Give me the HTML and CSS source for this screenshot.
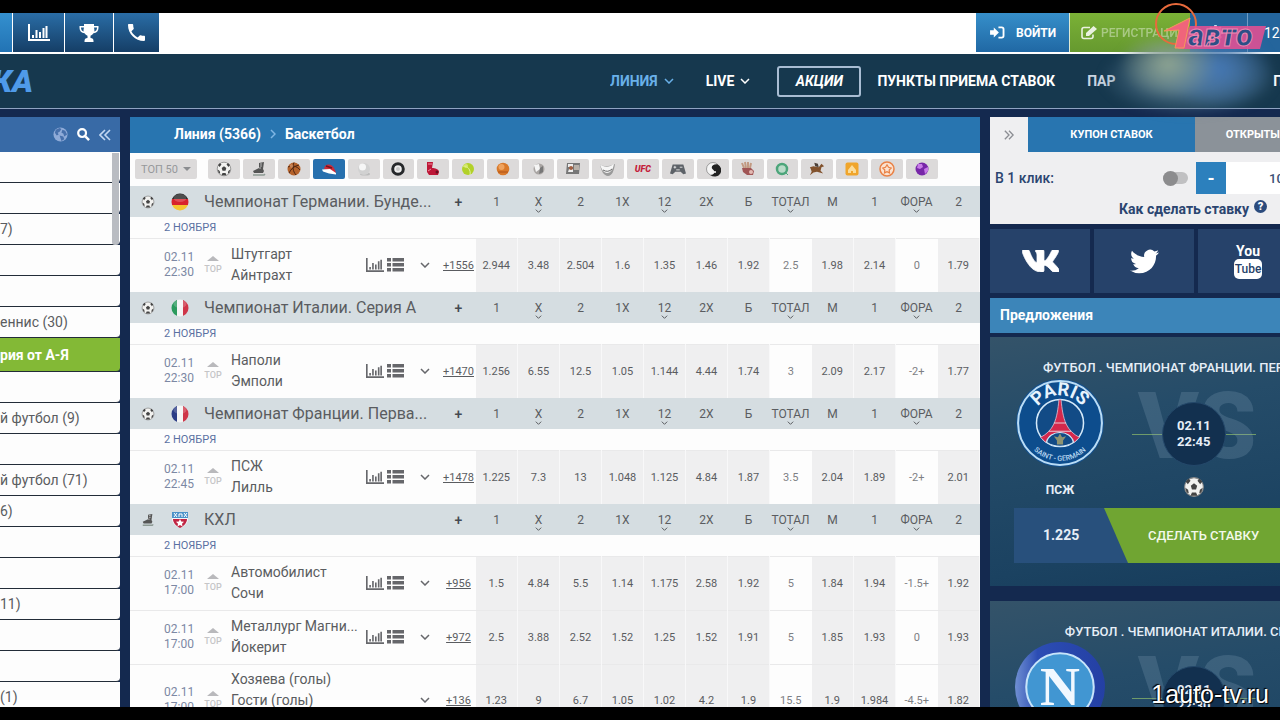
FILE: index.html
```html
<!DOCTYPE html>
<html lang="ru">
<head>
<meta charset="UTF-8">
<meta name="viewport" content="width=device-width, initial-scale=1.0">
<title>Линия · Баскетбол</title>
<link rel="stylesheet" href="styles.css">
</head>
<body>

<svg class="sprite" aria-hidden="true">
  <symbol id="i-chart" viewBox="0 0 22 17"><path d="M1 0v16h21M5 14v-3M8.500 14V6M12 14V8M15.500 14V4M18.500 14V2" fill="none" stroke="currentColor" stroke-width="2"/></symbol>
  <symbol id="i-list" viewBox="0 0 17 14"><path d="M0 0h4v3.500H0zM5.500 0H17v3.500H5.500zM0 5h4v3.500H0zM5.500 5H17v3.500H5.500zM0 10h4v3.500H0zM5.500 10H17v3.500H5.500z" fill="currentColor"/></symbol>
  <symbol id="i-cup" viewBox="0 0 20 18"><path d="M5 0h10v2h4.500v2c0 3-2 5-5 5.300-.8 1.200-1.800 2-3 2.400V14c2 .2 3 1 3 3v1h-9v-1c0-2 1-2.800 3-3v-2.300C7.300 11.300 6.300 10.500 5.500 9.300 2.500 9 .5 7 .5 4V2H5zM2 3.500C2 5.700 3 7 4.700 7.600 4.300 6.300 4.800 5 5 3.500zm16 0h-3c.2 1.500.6 2.800.3 4.100C17 7 18 5.700 18 3.500z" fill="currentColor" fill-rule="evenodd"/></symbol>
  <symbol id="i-phone" viewBox="3 3 18 18"><path d="M6.620 10.790c1.440 2.830 3.760 5.140 6.590 6.590l2.200-2.200c.27-.27.67-.36 1.020-.24 1.120.37 2.330.57 3.570.57.55 0 1 .45 1 1V20c0 .55-.45 1-1 1-9.390 0-17-7.610-17-17 0-.55.45-1 1-1h3.500c.55 0 1 .45 1 1 0 1.250.2 2.450.57 3.570.11.35.03.74-.25 1.020z" fill="currentColor"/></symbol>
  <symbol id="i-enter" viewBox="0 0 16 14"><path d="M0 4.500h4V1.500l5.500 5.500L4 12.500v-3H0z" fill="currentColor"/><path d="M9 1.500h3.500q2 0 2 2v7q0 2-2 2H9" fill="none" stroke="currentColor" stroke-width="2"/></symbol>
  <symbol id="i-edit" viewBox="0 0 16 14"><path d="M12 8.500v2q0 2-2 2H3q-2 0-2-2v-7q0-2 2-2h6" fill="none" stroke="currentColor" stroke-width="1.600"/><path d="M5 10V7l7.500-7L16 3 8 10z" fill="currentColor"/></symbol>
  <symbol id="i-gear" viewBox="0 0 16 16"><path d="M6.700 0h2.600l.5 2.200 1.300.5 1.900-1.200 1.700 1.700-1.100 1.900.5 1.300 2.200.4v2.600l-2.200.5-.5 1.300 1.100 1.900-1.700 1.700-1.900-1.200-1.300.6-.5 2.100H6.700l-.5-2.100-1.300-.6L3 14.800l-1.700-1.700 1.100-1.900-.5-1.300-1.900-.5V6.800l1.900-.4.5-1.300-1.100-1.900L3 1.500l1.900 1.200 1.300-.5zM8 5.200a2.800 2.800 0 100 5.600 2.800 2.800 0 000-5.600z" fill="currentColor" fill-rule="evenodd"/></symbol>
  <symbol id="i-globe" viewBox="0 0 16 16"><circle cx="8" cy="8" r="7.500" fill="#8fabd8"/><path d="M3 3l4-2 2 1-2 3-2 1 1 2-2 1-2-3zM10 3l3 1 2 4-3 2-1-3-2-1zM7 9l4 1 1 3-3 2z" fill="#4770ab"/></symbol>
  <symbol id="i-search" viewBox="0 0 14 14"><circle cx="5.500" cy="5.500" r="4.200" fill="none" stroke="currentColor" stroke-width="2.400"/><path d="M9 9l4 4" stroke="currentColor" stroke-width="2.600"/></symbol>
  <symbol id="i-dbl" viewBox="0 0 12 12"><path d="M6 1L1 6l5 5M11 1L6 6l5 5" fill="none" stroke="currentColor" stroke-width="1.600"/></symbol>
  <symbol id="i-down" viewBox="0 0 10 6"><path d="M1 1l4 4 4-4" fill="none" stroke="currentColor" stroke-width="1.500"/></symbol>
  <symbol id="i-vk" viewBox="18 96 530 320"><path d="M545 117.700c3.700-12.500 0-21.700-17.800-21.700h-58.900c-15 0-21.900 7.900-25.600 16.700 0 0-30 73.100-72.400 120.500-13.700 13.700-20 18.100-27.500 18.100-3.700 0-9.400-4.400-9.400-16.900V117.700c0-15-4.200-21.700-16.600-21.700h-92.600c-9.400 0-15 7-15 13.500 0 14.200 21.200 17.500 23.400 57.500v86.800c0 19-3.400 22.500-10.900 22.500-20 0-68.600-73.400-97.400-157.400-5.800-16.300-11.500-22.900-26.600-22.900H38.800c-16.800 0-20.200 7.900-20.200 16.700 0 15.600 20 93.100 93.100 195.500C160.400 378.100 229 416 291.400 416c37.500 0 42.100-8.400 42.100-22.900 0-66.800-3.400-73.100 15.400-73.100 8.700 0 23.700 4.400 58.700 38.100 40 40 46.600 57.900 69 57.900h58.900c16.800 0 25.300-8.400 20.400-25-11.200-34.900-86.900-106.700-90.300-111.500-8.700-11.200-6.200-16.200 0-26.200.1-.1 72-101.300 79.400-135.600z" fill="currentColor" stroke="currentColor" stroke-width="12"/></symbol>
  <symbol id="i-tw" viewBox="0 2 24 20"><path d="M23.953 4.570a10 10 0 01-2.825.775 4.958 4.958 0 002.163-2.723c-.951.555-2.005.959-3.127 1.184a4.920 4.920 0 00-8.384 4.482C7.690 8.095 4.067 6.130 1.640 3.162a4.822 4.822 0 00-.666 2.475c0 1.710.87 3.213 2.188 4.096a4.904 4.904 0 01-2.228-.616v.06a4.923 4.923 0 003.946 4.827 4.996 4.996 0 01-2.212.085 4.936 4.936 0 004.604 3.417 9.867 9.867 0 01-6.102 2.105c-.39 0-.779-.023-1.170-.067a13.995 13.995 0 007.557 2.209c9.053 0 13.998-7.496 13.998-13.985 0-.21 0-.42-.015-.63A9.935 9.935 0 0024 4.590z" fill="currentColor"/></symbol>

  <!-- виды спорта -->
  <symbol id="s-soccer" viewBox="0 0 16 16"><circle cx="8" cy="8" r="6.800" fill="#f2f2f0" stroke="#888" stroke-width=".8"/><path d="M5.700 7L8 5.300 10.300 7l-.8 2.800h-3zM2 4l2-2 1.500 1.500-2 2.500zM14 4l-2-2-1.500 1.500 2 2.500zM1.700 8.500l2 1.500.5 2.500-1.500-.5zM14.300 8.500l-2 1.500-.5 2.500 1.500-.5zM5.500 14.300L6.500 12h3l1 2.300z" fill="#444"/></symbol>
  <symbol id="s-skate" viewBox="0 0 16 16"><path d="M8 2l5-1-1 7 1 2-1 2H3l-1-2 6-3z" fill="#555"/><path d="M9 3l2 0M9 5l2 0M8 7l2 0" stroke="#bbb"/><path d="M2 14h11l1-1" stroke="#8d9a94" stroke-width="1.500" fill="none"/></symbol>
  <symbol id="s-basket" viewBox="0 0 16 16"><circle cx="8" cy="8" r="6.500" fill="#b5622b"/><path d="M2 6c4-2 9-1 12 3M8 1.500c-2 4-1 9 2 12.500M3 12c2-4 5-7 10-8" fill="none" stroke="#4d2512"/><circle cx="5.500" cy="5" r="1.700" fill="#e2a070" opacity=".7"/></symbol>
  <symbol id="s-cap" viewBox="0 0 16 16"><path d="M3 8c1-6 8-6 11 1l1 3z" fill="#cf2b39"/><path d="M5 5l6 2" stroke="#721421" stroke-width="1.500"/><path d="M1 8.500l8-.5 6 4v1.500l-7-1-6-2z" fill="#fff"/></symbol>
  <symbol id="s-white" viewBox="0 0 16 16"><ellipse cx="9" cy="13" rx="5" ry="1.500" fill="#bbb"/><circle cx="8" cy="8" r="6" fill="#d1d1d1"/><circle cx="6.500" cy="6" r="3.500" fill="#f6f6f6"/></symbol>
  <symbol id="s-tyre" viewBox="0 0 16 16"><circle cx="8" cy="8" r="5.300" fill="#eee" stroke="#26282b" stroke-width="3"/><circle cx="8" cy="8" r="2" fill="#c9c9c9"/></symbol>
  <symbol id="s-box" viewBox="0 0 16 16"><path d="M2 1h6l-1 6c3 0 7 1 7 4l-1 3H4l-2-3z" fill="#bd1737"/><path d="M3 3h4M3 10l3-2" stroke="#f68b9c"/><circle cx="12" cy="11" r="1.500" fill="#6c0d20"/></symbol>
  <symbol id="s-tennis" viewBox="0 0 16 16"><circle cx="8" cy="8" r="6" fill="#b2d129"/><path d="M3 5c5 0 8 4 7 9" stroke="#e3f2a0" fill="none"/><circle cx="6" cy="5" r="2" fill="#dcec7d" opacity=".8"/></symbol>
  <symbol id="s-orange" viewBox="0 0 16 16"><circle cx="8" cy="8" r="6.300" fill="#d9792a"/><circle cx="6.500" cy="6" r="3" fill="#efa35f"/><path d="M3 11h10" stroke="#af5317"/></symbol>
  <symbol id="s-shuttle" viewBox="0 0 16 16"><circle cx="9" cy="8" r="5.500" fill="#a9a5a3"/><path d="M4 4l5-1 1 5-4 3z" fill="#f5f5f5"/><path d="M10 7l3-2v6l-4 2z" fill="#777"/></symbol>
  <symbol id="s-tv" viewBox="0 0 16 16"><path d="M2 2h13l-1 11H1z" fill="#777"/><path d="M3 3h5v3H3zM4 8h4v3H3z" fill="#eee"/><path d="M9 4h5v5H9z" fill="#b8b1a9"/><circle cx="6" cy="7" r="2" fill="#a25f41"/></symbol>
  <symbol id="s-base" viewBox="0 0 16 16"><path d="M0 3c3 3 8 3 15 0-1 7-3 12-7 12S1 10 0 3z" fill="#9a9a9a"/><path d="M0 3c4 4 10 3 14 0-1 6-4 9-7 9S1 8 0 3z" fill="#f6f6f6"/><path d="M3 9q5 3 9-1" stroke="#666" fill="none"/></symbol>
  <symbol id="s-pad" viewBox="0 0 18 16"><path d="M3 3h12l3 10-3 1-3-3H6l-3 3-3-1z" fill="#5d6268"/><path d="M4 6h3M5.500 4.500v3M11 6h3M7 9h4" stroke="#e9e9e9"/></symbol>
  <symbol id="s-yin" viewBox="0 0 16 16"><circle cx="8" cy="8" r="6.500" fill="#f4f4f4" stroke="#555" stroke-width=".5"/><path d="M11 2.200A6.500 6.500 0 117 14.400c4-1 4-5 1-6S6 3 11 2.200z" fill="#222" transform="rotate(15 8 8)"/><circle cx="10" cy="11" r="1" fill="#fff"/></symbol>
  <symbol id="s-hand" viewBox="0 0 16 16"><path d="M2 2l2 5M5 1l1 6M8 1v6M11 2l-1 5" stroke="#c29a82" stroke-width="2"/><path d="M2 7h9l3 3-1 4H7l-4-3z" fill="#a05555"/><circle cx="11" cy="11" r="2" fill="#e3bab3"/></symbol>
  <symbol id="s-ring" viewBox="0 0 16 16"><circle cx="8" cy="8" r="5" fill="#b9dac8" stroke="#4ca57a" stroke-width="2.500"/><path d="M12 12l2 2" stroke="#4ca57a"/></symbol>
  <symbol id="s-horse" viewBox="0 0 18 16"><path d="M1 6l4-1 6 1 3-4 3 3-3 1-1 4 3 3-4-1-3-1-4 1-4 3 2-4-1-3z" fill="#82522d"/><path d="M6 1l4 1 1 4-4-1z" fill="#4c4038"/></symbol>
  <symbol id="s-yellow" viewBox="0 0 16 16"><rect x="1.500" y="1.500" width="13" height="13" rx="2" fill="#f0a52b"/><path d="M4 9l4-5 4 5v3H9v-2H7v2H4z" fill="#fbdc9a"/></symbol>
  <symbol id="s-star" viewBox="0 0 16 16"><circle cx="8" cy="8" r="7" fill="#fbe2d0" stroke="#e98145" stroke-width="1.500"/><path d="M8 3.800l1.500 2.500 2.700.7-2 2 .3 2.900L8 10.700l-2.500 1.200.3-2.900-2-2 2.700-.7z" fill="none" stroke="#e98145" stroke-width="1.200"/></symbol>
  <symbol id="s-purple" viewBox="0 0 16 16"><circle cx="8" cy="8" r="6.500" fill="#7726a8"/><path d="M4 3l4 0 1 3-3 2-3-1zM10 8l4-2v4l-3 3z" fill="#c87be8"/></symbol>

  <!-- флаги -->
  <symbol id="f-de" viewBox="0 0 18 18"><g clip-path="url(#round)"><path fill="#222" d="M0 0h18v6H0z"/><path fill="#d8232c" d="M0 6h18v6H0z"/><path fill="#f5c52f" d="M0 12h18v6H0z"/></g><ellipse cx="9" cy="5" rx="6.500" ry="4" fill="#fff" opacity=".2"/></symbol>
  <symbol id="f-it" viewBox="0 0 18 18"><g clip-path="url(#round)"><path fill="#2b9a5d" d="M0 0h6v18H0z"/><path fill="#f4f4f4" d="M6 0h6v18H6z"/><path fill="#cf3548" d="M12 0h6v18h-6z"/></g><ellipse cx="9" cy="5" rx="6.500" ry="4" fill="#fff" opacity=".2"/></symbol>
  <symbol id="f-fr" viewBox="0 0 18 18"><g clip-path="url(#round)"><path fill="#2b3c86" d="M0 0h6v18H0z"/><path fill="#f4f4f4" d="M6 0h6v18H6z"/><path fill="#cf3548" d="M12 0h6v18h-6z"/></g><ellipse cx="9" cy="5" rx="6.500" ry="4" fill="#fff" opacity=".2"/></symbol>
  <symbol id="f-khl" viewBox="0 0 18 18"><path d="M1 1h16v7c0 4-3 7-8 9-5-2-8-5-8-9z" fill="#f3f6fa"/><path d="M1 1h16v6H1z" fill="#4b92c9"/><path d="M3 2l3 4M6 2L3 6M8 6V3h3v3M13 2l3 4M16 2l-3 4" stroke="#fff" fill="none"/><path d="M2 8h14c0 4-3 7-7 9-4-2-7-5-7-9z" fill="#c02543"/><path d="M9 8l1.200 2.500 2.800.3-2 2 .5 2.700L9 14l-2.500 1.500.5-2.700-2-2 2.800-.3z" fill="#fff"/></symbol>
  <clipPath id="round"><circle cx="9" cy="9" r="8.500"/></clipPath>
</svg>

<div class="screen">
  <div class="topbar">
    <button class="tool on" aria-label="Меню"></button>
    <button class="tool w-l" aria-label="Статистика"><svg width="22" height="17"><use href="#i-chart"/></svg></button>
    <button class="tool w-m" aria-label="Результаты"><svg width="20" height="18"><use href="#i-cup"/></svg></button>
    <button class="tool w-s" aria-label="Телефон"><svg width="17" height="17"><use href="#i-phone"/></svg></button>
    <div class="account">
      <button class="login"><svg width="15" height="13"><use href="#i-enter"/></svg>ВОЙТИ</button>
      <button class="reg"><svg width="16" height="14"><use href="#i-edit"/></svg><span>РЕГИСТРАЦИЯ</span></button>
      <button class="gear" aria-label="Настройки"><svg width="15" height="15"><use href="#i-gear"/></svg></button>
      <span class="clock">12</span>
    </div>
  </div>

  <header class="head">
    <a class="brand" href="#">КА</a>
    <nav class="nav">
      <a class="active" href="#">ЛИНИЯ <svg width="10" height="6"><use href="#i-down"/></svg></a>
      <a href="#">LIVE <svg width="10" height="6"><use href="#i-down"/></svg></a>
      <a class="promo" href="#">АКЦИИ</a>
      <a href="#">ПУНКТЫ ПРИЕМА СТАВОК</a>
      <a class="partner" href="#">ПАР</a>
      <a class="last" href="#">П</a>
    </nav>
  </header>

  <div class="cols">
    <aside class="left">
      <div class="left-head">
        <svg width="15" height="15"><use href="#i-globe"/></svg>
        <svg width="13" height="13"><use href="#i-search"/></svg>
        <svg width="12" height="12"><use href="#i-dbl"/></svg>
      </div>
      <ul class="menu" id="menu"></ul>
      <div class="thumb"></div>
    </aside>

    <main class="line">
      <div class="crumbs"><a href="#">Линия (5366)</a><svg width="10" height="6"><use href="#i-down"/></svg><a href="#">Баскетбол</a></div>
      <div class="sports">
        <button class="top50">ТОП 50 <i></i></button>
        <div class="sport-list" id="sports"></div>
      </div>
      <table class="odds">
        <colgroup><col><col class="c-more"><col span="12" class="c-odd"></colgroup>
        <tbody id="odds"></tbody>
      </table>
    </main>

    <aside class="right">
      <section class="coupon">
        <div class="tabs">
          <button class="fold" aria-label="Свернуть"><svg width="10" height="10"><use href="#i-dbl"/></svg></button>
          <button class="tab on">КУПОН СТАВОК</button>
          <button class="tab">ОТКРЫТЫЕ СТАВКИ</button>
        </div>
        <div class="click">
          <label for="oneClick">В 1 клик:</label>
          <input type="checkbox" id="oneClick" class="switch">
          <button class="minus" aria-label="Меньше">-</button>
          <input type="text" class="stake" value="100" aria-label="Сумма ставки">
        </div>
        <a class="how" href="#">Как сделать ставку <b>?</b></a>
      </section>
      <div class="social">
        <a href="#" aria-label="ВКонтакте"><svg width="37" height="22"><use href="#i-vk"/></svg></a>
        <a href="#" aria-label="Twitter"><svg width="29" height="25"><use href="#i-tw"/></svg></a>
        <a href="#" class="yt"><span>You</span><b>Tube</b></a>
      </div>
      <h2>Предложения</h2>

      <article class="offer">
        <h3>ФУТБОЛ . ЧЕМПИОНАТ ФРАНЦИИ. ПЕРВАЯ ЛИГА</h3>
        <div class="duel">
          <div class="team">
            <svg width="90" height="90" viewBox="0 0 88 88">
              <defs><path id="arcTop" d="M17 44a27 27 0 0154 0"/><path id="arcBot" d="M7 44a37 37 0 0074 0"/></defs>
              <circle cx="44" cy="44" r="43" fill="#14508c"/>
              <circle cx="44" cy="44" r="41" fill="#0d4d8d" stroke="#b9dcf6" stroke-width="2"/>
              <circle cx="44" cy="44" r="23" fill="#124b86" stroke="#d5eafa" stroke-width="1.500"/>
              <path d="M43 21h2c1 10 2 17 5 24 3 6 7 10 13 13l-5 5c-2-6-7-9-14-9s-12 3-14 9l-5-5c6-3 10-7 13-13 3-7 4-14 5-24z" fill="#d5284c" stroke="#d9c3d6" stroke-width=".8"/>
              <path d="M38 44h12M33 52h22" stroke="#e9cbd6"/>
              <path d="M31 63c2-13 24-13 26 0-8 5-18 5-26 0z" fill="#124b86" stroke="#d5eafa"/>
              <path d="M44 54l2 4 4-1-3 4v4h-6v-4l-3-4 4 1z" fill="#8f9472"/>
              <text class="psg-big"><textPath href="#arcTop" startOffset="50%" text-anchor="middle">PARIS</textPath></text>
              <text class="psg-small"><textPath href="#arcBot" startOffset="50%" text-anchor="middle">SAINT - GERMAIN</textPath></text>
            </svg>
            <span>ПСЖ</span>
          </div>
          <div class="versus">
            <span class="vs">VS</span>
            <time>02.11<br>22:45</time>
            <svg class="ball" width="22" height="22"><use href="#s-soccer"/></svg>
          </div>
        </div>
        <div class="bet"><span>1.225</span><button>СДЕЛАТЬ СТАВКУ</button></div>
      </article>

      <article class="offer">
        <h3>ФУТБОЛ . ЧЕМПИОНАТ ИТАЛИИ. СЕРИЯ А</h3>
        <div class="duel">
          <div class="team">
            <svg width="90" height="90" viewBox="0 0 88 88">
              <defs><linearGradient id="nap" x1="0" x2="1"><stop offset="0" stop-color="#6f8fd2"/><stop offset=".25" stop-color="#2c4db4"/><stop offset="1" stop-color="#2440a4"/></linearGradient></defs>
              <circle cx="44" cy="44" r="44" fill="url(#nap)"/>
              <circle cx="44" cy="44" r="33" fill="#4196d2" stroke="#c7e4fa" stroke-width="2"/>
              <text x="44" y="62" text-anchor="middle" class="nap">N</text>
            </svg>
          </div>
          <div class="versus">
            <span class="vs">VS</span>
            <time>02.11<br>22:30</time>
          </div>
        </div>
      </article>
    </aside>
  </div>
</div>

<div class="haze"></div>
<svg class="channel" width="116" height="52" viewBox="0 0 116 52">
  <circle cx="24" cy="24" r="20" fill="none" stroke="#e86a3c" stroke-width="2"/>
  <path d="M38 26h76l-6 23H26z" fill="#ea4f93" opacity=".85"/>
  <path d="M12 31l26-13-6 30h-9l4-18z" fill="#f0647b" stroke="#f39a58"/>
  <text x="36" y="46">авто</text>
</svg>
<div class="site">1auto-tv.ru</div>

<script>
const $ = s => document.querySelector(s);
const icon = (id, w = 16, h = w) => `<svg width="${w}" height="${h}"><use href="#${id}"/></svg>`;

const MENU = ['', '', '7)', '', '', 'еннис (30)', '*рия от А-Я', '', 'й футбол (9)', '', 'й футбол (71)', '6)', '', '', '11)', '', '', '(1)'];
const SPORTS = ['soccer','skate','basket','cap','white','tyre','box','tennis','orange','shuttle','tv','base','ufc','pad','yin','hand','ring','horse','yellow','star','purple'];
const HEADS = ['1','X','2','1X','12','2X','Б','ТОТАЛ','М','1','ФОРА','2'];
const DROP = [1, 4, 7, 10];   // колонки со стрелкой
const LEAGUES = [
  {sport:'soccer', flag:'de', name:'Чемпионат Германии. Бунде...', rows:[
    ['22:30','Штутгарт','Айнтрахт',1556,'2.944 3.48 2.504 1.6 1.35 1.46 1.92 2.5 1.98 2.14 0 1.79']]},
  {sport:'soccer', flag:'it', name:'Чемпионат Италии. Серия А', rows:[
    ['22:30','Наполи','Эмполи',1470,'1.256 6.55 12.5 1.05 1.144 4.44 1.74 3 2.09 2.17 -2+ 1.77']]},
  {sport:'soccer', flag:'fr', name:'Чемпионат Франции. Перва...', rows:[
    ['22:45','ПСЖ','Лилль',1478,'1.225 7.3 13 1.048 1.125 4.84 1.87 3.5 2.04 1.89 -2+ 2.01']]},
  {sport:'skate', flag:'khl', name:'КХЛ', rows:[
    ['17:00','Автомобилист','Сочи',956,'1.5 4.84 5.5 1.14 1.175 2.58 1.92 5 1.84 1.94 -1.5+ 1.92'],
    ['17:00','Металлург Магни...','Йокерит',972,'2.5 3.88 2.52 1.52 1.25 1.52 1.91 5 1.85 1.93 0 1.93'],
    ['17:00','Хозяева (голы)','Гости (голы)',136,'1.23 9 6.7 1.05 1.02 4.2 1.9 15.5 1.9 1.984 -4.5+ 1.82','tall']]}
];

$('#menu').innerHTML = MENU.map(m => m[0] === '*' ? `<li class="all">${m.slice(1)}</li>` : `<li>${m}</li>`).join('');

$('#sports').innerHTML = SPORTS.map(s =>
  `<button class="${s === 'cap' ? 'on' : ''}" aria-label="${s}">${s === 'ufc' ? '<em>UFC</em>' : icon('s-' + s)}</button>`).join('');

function matchRow([time, a, b, more, odds, tall]){
  const cells = odds.split(' ').map((o, i) => `<td class="${i === 7 || i === 10 ? 'val' : 'odd'}">${o}</td>`).join('');
  return `<tr class="match ${tall || ''}">
    <td class="game"><div>
      <time>02.11<br>${time}</time>
      <span class="top">TOP</span>
      <span class="teams"><span>${a}</span><span>${b}</span></span>
      <span class="stat">${tall ? '' : icon('i-chart', 18, 14) + icon('i-list', 17, 14)}</span>
      <button class="open" aria-label="Развернуть">${icon('i-down', 10, 6)}</button>
    </div></td>
    <td class="more"><a href="#">+${more}</a></td>${cells}</tr>`;
}

$('#odds').innerHTML = LEAGUES.map(l => `<tr class="league">
    <th><div>${icon('s-' + l.sport, 14)}${icon('f-' + l.flag, 18)}<span>${l.name}</span></div></th>
    <th class="plus">+</th>
    ${HEADS.map((h, i) => `<th class="${DROP.includes(i) ? 'drop' : ''}">${h}${DROP.includes(i) ? icon('i-down', 7, 4) : ''}</th>`).join('')}
  </tr>
  <tr class="day"><td colspan="14">2 НОЯБРЯ</td></tr>
  ${l.rows.map(matchRow).join('')}`).join('');
</script>
</body>
</html>
```
FILE: styles.css
```css
:root {
  --navy: #14294f;
  --deep: #16384e;
  --blue: #2875b0;
  --green: #70a532;
  --grey: #d5dde1;
  --text: #5a5c60;
}
*{box-sizing:border-box;}
body{margin:0;padding:13px 0;background:#000;font-family:Roboto,"Open Sans",sans-serif;font-size:14px;color:var(--text);overflow:hidden;}
button,input{font:inherit;border:0;padding:0;margin:0;cursor:pointer;}
a{color:inherit;text-decoration:none;}
svg{display:block;flex:none;}
.sprite{position:absolute;width:0;height:0;}
.screen{display:flex;flex-direction:column;height:calc(100vh - 26px);overflow:hidden;background:var(--navy);}

/* верхняя полоса */
.topbar{display:flex;flex:none;height:41px;padding-bottom:2px;gap:1px;background:#fff;}
.tool{display:flex;align-items:center;justify-content:center;background:linear-gradient(#2a6da6,#153e66);color:#fff;}
.tool.on{width:12px;background:linear-gradient(#3490cf,#2273b4);}
.w-l{width:51px;}
.w-m{width:48px;}
.w-s{width:45px;}
.account{display:flex;width:304px;margin-left:auto;color:#fff;background:#24659c;}
.account button{display:flex;align-items:center;color:#fff;font-weight:500;}
.account .login{width:93px;gap:11px;padding-left:14px;font-size:12px;font-weight:700;background:linear-gradient(#368fca,#2068a4);}
.account .reg{width:121px;gap:4px;padding-left:11px;font-size:12px;background:linear-gradient(#7ab136,#66992f);border-left:1px solid #dfe9d4;}
.reg svg{opacity:.85;}
.reg span{opacity:.4;}
.account .gear{width:58px;padding-left:18px;background:#24659c;border-right:1px solid #6f9cc4;color:#c9dcf2;}
.clock{padding:11px 0 0 16px;font-size:14px;line-height:18px;}

/* шапка */
.head{display:flex;flex:none;align-items:center;height:55px;background:var(--deep);border-bottom:1px solid #8fa3c2;}
.brand{margin-left:-8px;font-size:32px;line-height:32px;font-weight:900;font-style:italic;color:#4f9bea;}
.nav{display:flex;align-items:center;width:670px;margin-left:auto;font-size:14px;font-weight:700;color:#fff;white-space:nowrap;overflow:hidden;}
.nav a{display:flex;align-items:center;flex:none;gap:6px;margin-right:32px;}
.nav .active{color:#69b0e8;}
.nav .promo{width:84px;height:31px;justify-content:center;margin:0 16px 0 -5px;border:2px solid #a9bdd3;border-radius:3px;font-style:italic;}
.nav .partner{width:154px;color:#c9d5e1;}

/* колонки */
.cols{display:flex;flex:1;gap:10px;min-height:0;padding-top:8px;}
.left{position:relative;flex:none;width:120px;overflow:hidden;}
.left-head{display:flex;align-items:center;justify-content:flex-end;gap:9px;height:35px;padding-right:9px;background:#386aa6;color:#c3d7f2;}
.left-head svg:nth-child(2){color:#fff;}
.menu{list-style:none;margin:0;padding:0;}
.menu li{height:31px;line-height:30px;font-size:14px;background:#fdfdfd;border-bottom:1px solid #222c38;border-radius:0 0 4px 0;white-space:nowrap;}
.menu .all{height:34px;line-height:34px;background:#83b936;color:#fff;font-weight:700;}
.thumb{position:absolute;top:36px;right:1px;width:7px;height:92px;background:#b9bcc2;border-radius:0 0 3px 3px;}

.line{flex:1;min-width:0;overflow:hidden;background:#fdfdfd;}
.crumbs{display:flex;align-items:center;gap:7px;height:36px;padding-left:44px;padding-bottom:2px;background:var(--blue);color:#fff;font-size:14px;font-weight:700;}
.crumbs svg{transform:rotate(-90deg);color:#7fb6e4;}
.sports{display:flex;gap:11px;height:33px;padding:6px 42px 7px 5px;}
.sports button{background:#dcdada;border-radius:2px;}
.sports .top50{display:flex;align-items:center;justify-content:center;gap:5px;width:62px;color:#96989b;font-size:11px;}
.top50 i{border:4px solid transparent;border-top-color:#8b8d90;border-bottom:0;}
.sport-list{display:flex;flex:1;gap:3px;}
.sport-list button{display:flex;flex:1;align-items:center;justify-content:center;min-width:0;}
.sport-list .on{background:#2770ae;}
.sport-list em{color:#c4213a;font-size:9px;font-weight:900;}

.odds{width:100%;table-layout:fixed;border-collapse:collapse;font-size:11px;text-align:center;}
.odds th,.odds td{padding:0;font-weight:400;}
.c-more{width:34px;}
.c-odd{width:42px;}
.league{height:31px;background:var(--grey);font-size:12px;}
.league div{display:flex;align-items:center;padding-left:11px;text-align:left;}
.league div svg + svg{margin:0 15px 0 16px;}
.league div span{font-size:16px;line-height:30px;white-space:nowrap;}
.odds .plus{font-size:14px;font-weight:500;color:#454a52;}
.drop{position:relative;}
.drop svg{position:absolute;left:50%;top:23px;margin-left:-4px;}
.day{height:21px;}
.odds .day td{padding-left:34px;text-align:left;color:#5a70a2;font-size:11px;}
.match{height:54px;border-top:1px solid #e9e9ea;}
.match.tall{height:72px;}
.game div{display:flex;align-items:center;padding-left:34px;text-align:left;}
.game time{width:38px;color:#7c88a4;font-size:12px;line-height:15px;}
.top{width:22px;margin-right:7px;color:#c5c5c7;font-size:9px;line-height:10px;font-weight:500;text-align:center;}
.top::before{content:"";display:block;width:0;margin:0 auto 3px;border:6px solid transparent;border-top:0;border-bottom:5px solid #b9b9bc;}
.teams{width:135px;font-size:14px;line-height:21px;}
.teams span{display:block;white-space:nowrap;}
.tall .teams{padding-bottom:21px;}
.stat{display:flex;gap:3px;width:54px;color:#66676b;}
.open{background:none;color:#66676b;}
.more a{text-decoration:underline;}
.odd{background:#efeff0;border-right:1px solid #f8f8f9;}
.val{color:#7d7f84;}

/* правая колонка */
.right{flex:none;width:290px;overflow:hidden;}
.coupon{width:372px;height:107px;background:#efeff1;color:#2b4570;}
.tabs{display:flex;height:35px;}
.fold{display:flex;align-items:center;justify-content:center;width:38px;background:none;color:#8b8d93;}
.fold svg{transform:rotate(180deg);}
.tab{flex:1;background:#8b9299;color:#fff;font-size:11px;font-weight:700;}
.tab.on{background:var(--blue);}
.click{display:flex;align-items:center;height:52px;padding-left:5px;font-weight:500;}
.click label{width:168px;}
.switch{appearance:none;display:flex;align-items:center;width:25px;height:12px;margin-right:8px;border-radius:6px;background:#c0c0c2;}
.switch::before{content:"";width:15px;height:15px;border-radius:50%;background:#8c8c8e;}
.minus{width:30px;height:32px;background:#2c80bd;color:#fff;font-size:18px;font-weight:700;}
.stake{width:136px;height:32px;padding-left:43px;background:#fff;color:#3c5276;font-size:13px;}
.how{display:flex;align-items:center;gap:5px;padding-left:129px;line-height:8px;font-weight:700;}
.how b{width:13px;height:13px;margin-top:-4px;border-radius:50%;background:#2b4b7d;color:#fff;font-size:11px;line-height:13px;text-align:center;}
.social{display:flex;gap:4px;width:408px;padding:5px 0;}
.social a{display:flex;align-items:center;justify-content:center;width:100px;height:64px;background:#26426a;color:#fff;}
.social .yt{flex-direction:column;font-weight:700;font-size:14px;line-height:15px;}
.yt b{padding:3px 1px;border-radius:5px;background:#fff;color:#26426a;font-size:12px;line-height:14px;font-weight:500;}
.right h2{margin:0 0 4px;height:35px;padding-left:10px;background:#3c85b9;color:#fff;font-size:14px;line-height:35px;font-weight:700;}
.offer{width:408px;height:249px;margin-bottom:15px;padding-top:21px;background:linear-gradient(170deg,#345369 0,#254c69 30%,#1b4261 75%,#153a59);color:#e6eef7;}
.offer h3{margin:0;font-size:13px;line-height:20px;font-weight:500;text-align:center;}
.duel{display:flex;height:130px;}
.team{display:flex;flex-direction:column;align-items:center;gap:12px;width:140px;font-size:12px;font-weight:700;line-height:20px;}
.versus{position:relative;display:flex;flex-direction:column;align-items:center;width:128px;padding-top:24px;background:linear-gradient(#6f9b6a,#6f9b6a) 50% 56px/124px 1px no-repeat;}
.vs{position:absolute;left:8px;top:3px;font-size:92px;line-height:92px;font-weight:900;color:#8fabc2;opacity:.22;}
.versus time{position:relative;display:flex;align-items:center;width:64px;height:64px;padding-left:14px;border-radius:50%;background:#12304f;border:1px solid #24486a;font-size:13px;line-height:16px;font-weight:700;}
.ball{margin-top:10px;}
.bet{display:flex;height:55px;margin-left:24px;}
.bet span{width:114px;padding-left:29px;margin-right:-24px;background:#28507c;font-size:14px;line-height:55px;font-weight:700;}
.bet button{width:270px;padding-left:44px;background:var(--green);clip-path:polygon(0 0,100% 0,100% 100%,24px 100%);color:#f3f9ea;font-size:13px;font-weight:500;text-align:left;}
.psg-big{fill:#e7f3fd;font-size:18px;font-weight:700;}
.psg-small{fill:#b9d8f2;font-size:7px;font-weight:500;}
.nap{fill:#f1f8ff;font-family:"Liberation Serif",serif;font-size:54px;font-weight:700;}

/* поверх трансляции */
.haze{position:absolute;right:6px;top:38px;width:180px;height:78px;background:radial-gradient(ellipse 50px 36px at 74px 26px,#8fa592,transparent),radial-gradient(ellipse 56px 42px at 124px 30px,#4477b4,transparent),radial-gradient(ellipse 90px 39px at 96px 40px,#4c7088 30%,transparent);filter:blur(4px);}
.channel{position:absolute;right:12px;top:0;}
.channel text{fill:#2d4f86;stroke:#f08ab4;stroke-width:1;font-size:31px;font-weight:900;font-style:italic;}
.site{position:absolute;right:11px;bottom:12px;color:#fff;font-family:"Liberation Sans",Arial,sans-serif;font-size:25px;line-height:28px;text-shadow:1px 1px 1px #000,-1px -1px 1px #000;}
```
